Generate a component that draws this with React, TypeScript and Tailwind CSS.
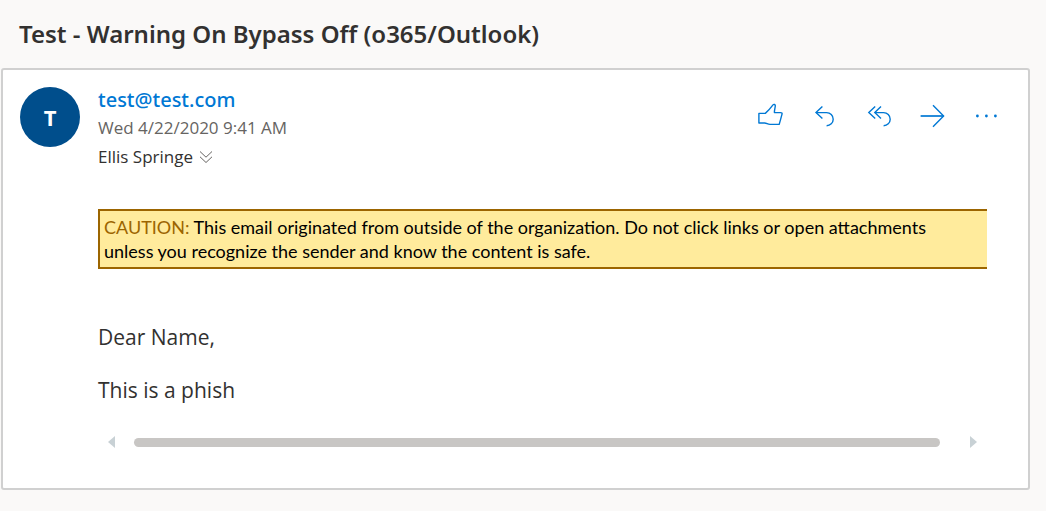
import type { ReactNode } from "react";

function Icon({ children }: { children: ReactNode }) {
  return (
    <svg
      viewBox="0 0 28 28"
      className="size-7"
      fill="none"
      stroke="currentColor"
      strokeWidth="1.4"
      aria-hidden="true"
    >
      {children}
    </svg>
  );
}

const actions: { label: string; icon: ReactNode }[] = [
  {
    label: "Like",
    icon: (
      <path
        d="M2.9 11.4H9.3C11.2 9.8 14.8 5.8 17 2.9C17.8 2 19.4 2.4 19.3 4C19 6.2 18.4 8 18.4 10.6H24.6C25.8 10.6 26.3 11.2 26 12.2C25.3 15 24.2 19 23.2 22.4H14C11.5 22.4 10.8 21 8.6 21H2.9Z"
        strokeLinejoin="round"
      />
    ),
  },
  {
    label: "Reply",
    icon: (
      <>
        <path d="M12.4 4.4L6 10.6L12.4 16.4" />
        <path d="M6 10.6H16.6A6.6 6.6 0 0 1 16.6 23.8" />
      </>
    ),
  },
  {
    label: "Reply all",
    icon: (
      <>
        <path d="M11.2 4.4L4.8 10.6L11.2 16.4" />
        <path d="M17 4.4L10.8 10.6L17 16.4" />
        <path d="M10.8 10.6H19.6A6.6 6.6 0 0 1 19.6 23.8" />
      </>
    ),
  },
  {
    label: "Forward",
    icon: (
      <>
        <path d="M2.6 14H25.6" strokeWidth="1.7" />
        <path d="M15 3.3L25.6 14L15 24.7" />
      </>
    ),
  },
  {
    label: "More actions",
    icon: (
      <g fill="currentColor" stroke="none">
        <circle cx="5.4" cy="14" r="1.4" />
        <circle cx="14.4" cy="14" r="1.4" />
        <circle cx="23.4" cy="14" r="1.4" />
      </g>
    ),
  },
];

export default function App() {
  return (
    <main className="min-h-screen bg-[#faf9f8] pr-4 pb-5 pl-px font-['Open_Sans','Noto_Sans',sans-serif] text-[#323130]">
      <h1 className="pt-[18px] pb-[18px] pl-[18px] font-['Noto_Sans',sans-serif] text-2xl leading-8 font-semibold">
        Test - Warning On Bypass Off (o365/Outlook)
      </h1>

      <article className="rounded-[3px] border-2 border-[#d0d0d0] bg-white pt-4 pb-10 pl-[17px]">
        <header className="flex items-start">
          <div className="mt-px flex size-[60px] shrink-0 items-center justify-center rounded-full bg-[#004e8c] text-[22px] font-bold text-white">
            T
          </div>
          <div className="ml-[18px] flex-1">
            <a
              href="mailto:test@test.com"
              className="block font-['Noto_Sans',sans-serif] text-xl leading-7 font-medium text-[#0078d4]"
            >
              test@test.com
            </a>
            <p className="text-[17px] leading-7 text-[#666462]">Wed 4/22/2020 9:41 AM</p>
            <p className="flex items-center text-[17px] leading-[30px]">
              Ellis Springe
              <button type="button" aria-label="Show details" className="ml-1.5 text-[#666462]">
                <svg
                  viewBox="0 0 14 14"
                  className="size-3.5"
                  fill="none"
                  stroke="currentColor"
                  aria-hidden="true"
                >
                  <path d="M1 1.5L7 7.2L13 1.5M1 6.8L7 12.5L13 6.8" />
                </svg>
              </button>
            </p>
          </div>
          <div className="mt-4 mr-[15px] flex text-[#0078d4]">
            {actions.map((action) => (
              <button
                key={action.label}
                type="button"
                aria-label={action.label}
                className="flex w-[54px] justify-center"
              >
                <Icon>{action.icon}</Icon>
              </button>
            ))}
          </div>
        </header>

        <div className="mt-[37px] mr-[41px] ml-[78px]">
          <p className="border-2 border-r-0 border-[#9c6500] bg-[#ffeb9c] py-1 pr-8 pl-1 font-['Lato',sans-serif] text-lg leading-6 text-black">
            <span className="text-[#9c6500]">CAUTION:</span> This email originated from outside of
            the organization. Do not click links or open attachments unless you recognize the sender
            and know the content is safe.
          </p>

          <div className="mt-[52px] space-y-[21px] text-[21px] leading-8">
            <p>Dear Name,</p>
            <p>This is a phish</p>
          </div>

          <div className="mt-[30px] flex h-3 items-center pr-2.5 pl-2.5 text-[#c8d1d5]">
            <button type="button" aria-label="Scroll left">
              <svg viewBox="0 0 7 12" className="h-3 w-[7px]" fill="currentColor" aria-hidden="true">
                <path d="M7 0V12L0 6Z" />
              </svg>
            </button>
            <div className="mr-[30px] ml-[19px] h-[9px] flex-1 rounded-full bg-[#c8c6c4]" />
            <button type="button" aria-label="Scroll right">
              <svg viewBox="0 0 7 12" className="h-3 w-[7px]" fill="currentColor" aria-hidden="true">
                <path d="M0 0V12L7 6Z" />
              </svg>
            </button>
          </div>
        </div>
      </article>
    </main>
  );
}
